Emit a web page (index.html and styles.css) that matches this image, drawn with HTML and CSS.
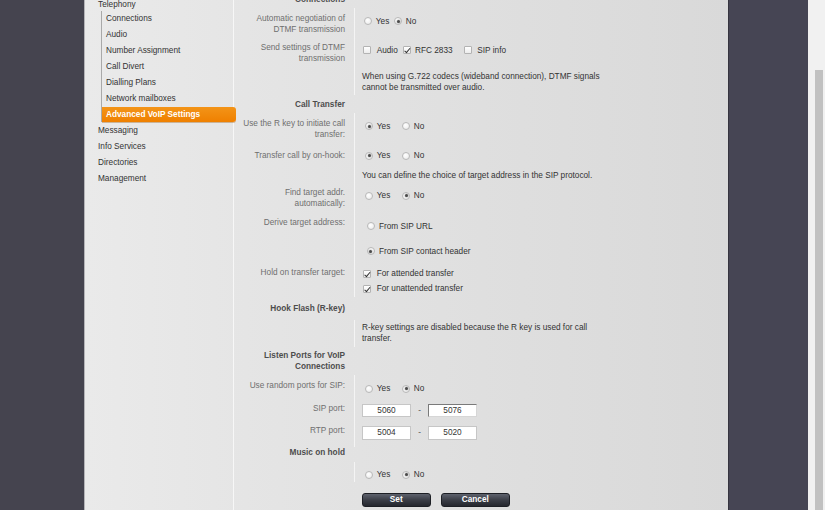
FILE: index.html
```html
<!DOCTYPE html>
<html lang="en">
<head>
<meta charset="utf-8">
<title>Advanced VoIP Settings</title>
<link rel="stylesheet" href="styles.css">
</head>
<body>
<div class="page">
  <div class="band-left"></div>
  <div class="panel">
    <nav class="nav">
      <div class="nav-item top">Telephony</div>
      <div class="sub">
        <div class="nav-sub">Connections</div>
        <div class="nav-sub">Audio</div>
        <div class="nav-sub">Number Assignment</div>
        <div class="nav-sub">Call Divert</div>
        <div class="nav-sub">Dialling Plans</div>
        <div class="nav-sub">Network mailboxes</div>
        <div class="nav-sub active">Advanced VoIP Settings</div>
      </div>
      <div class="nav-item">Messaging</div>
      <div class="nav-item">Info Services</div>
      <div class="nav-item">Directories</div>
      <div class="nav-item">Management</div>
    </nav>

    <main class="form">
      <div class="row head r-conn"><div class="lbl">Connections</div></div>

      <div class="row r-a">
        <div class="lbl">Automatic negotiation of DTMF transmission</div>
        <div class="val">
          <span class="opt tight first"><span class="radio"></span>Yes</span><span class="opt tight next"><span class="radio on"></span>No</span>
        </div>
      </div>
      <div class="row r-b">
        <div class="lbl">Send settings of DTMF transmission</div>
        <div class="val">
          <span class="chk-opt c-audio"><span class="box"></span>Audio</span><span class="chk-opt c-rfc"><span class="box on"></span>RFC 2833</span><span class="chk-opt c-sip"><span class="box"></span>SIP info</span>
        </div>
      </div>
      <div class="row r-c">
        <div class="lbl"></div>
        <div class="val hint">When using G.722 codecs (wideband connection), DTMF signals cannot be transmitted over audio.</div>
      </div>

      <div class="row head r-ct"><div class="lbl">Call Transfer</div></div>

      <div class="row r-r">
        <div class="lbl">Use the R key to initiate call transfer:</div>
        <div class="val">
          <span class="opt first"><span class="radio on"></span>Yes</span><span class="opt next"><span class="radio"></span>No</span>
        </div>
      </div>
      <div class="row r-tr">
        <div class="lbl">Transfer call by on-hook:</div>
        <div class="val">
          <span class="opt first"><span class="radio on"></span>Yes</span><span class="opt next"><span class="radio"></span>No</span>
        </div>
      </div>
      <div class="row r-def">
        <div class="lbl"></div>
        <div class="val hint">You can define the choice of target address in the SIP protocol.</div>
      </div>
      <div class="row r-find">
        <div class="lbl">Find target addr. automatically:</div>
        <div class="val">
          <span class="opt first"><span class="radio"></span>Yes</span><span class="opt next"><span class="radio on"></span>No</span>
        </div>
      </div>
      <div class="row r-der">
        <div class="lbl">Derive target address:</div>
        <div class="val">
          <span class="opt wide"><span class="radio"></span>From SIP URL</span>
        </div>
      </div>
      <div class="row r-cont">
        <div class="lbl"></div>
        <div class="val">
          <span class="opt wide"><span class="radio on"></span>From SIP contact header</span>
        </div>
      </div>
      <div class="row r-hold">
        <div class="lbl">Hold on transfer target:</div>
        <div class="val">
          <div class="chk-line"><span class="box on"></span>For attended transfer</div>
          <div class="chk-line"><span class="box on"></span>For unattended transfer</div>
        </div>
      </div>

      <div class="row head r-hf"><div class="lbl">Hook Flash (R-key)</div></div>

      <div class="row r-rk">
        <div class="lbl"></div>
        <div class="val hint">R-key settings are disabled because the R key is used for call transfer.</div>
      </div>

      <div class="row head r-lp"><div class="lbl">Listen Ports for VoIP Connections</div></div>

      <div class="row r-rnd">
        <div class="lbl">Use random ports for SIP:</div>
        <div class="val">
          <span class="opt first"><span class="radio"></span>Yes</span><span class="opt next"><span class="radio on"></span>No</span>
        </div>
      </div>
      <div class="row r-sip">
        <div class="lbl">SIP port:</div>
        <div class="val ports">
          <input class="port" type="text" value="5060"><span class="dash">-</span><input class="port focus" type="text" value="5076">
        </div>
      </div>
      <div class="row r-rtp">
        <div class="lbl">RTP port:</div>
        <div class="val ports">
          <input class="port" type="text" value="5004"><span class="dash">-</span><input class="port" type="text" value="5020">
        </div>
      </div>

      <div class="row head r-moh"><div class="lbl">Music on hold</div></div>

      <div class="row r-mohv">
        <div class="lbl"></div>
        <div class="val">
          <span class="opt first"><span class="radio"></span>Yes</span><span class="opt next"><span class="radio on"></span>No</span>
        </div>
      </div>

      <div class="row r-btn">
        <div class="lbl"></div>
        <div class="val noline">
          <button class="btn" type="button">Set</button><button class="btn" type="button">Cancel</button>
        </div>
      </div>
    </main>
  </div>
  <div class="band-right"></div>
  <div class="scrollbar"><div class="thumb"></div></div>
</div>
</body>
</html>
```
FILE: styles.css
```css
* { box-sizing: border-box; }

html, body {
  margin: 0;
  padding: 0;
  height: 510px;
  overflow: hidden;
}

body {
  font-family: "Liberation Sans", Arial, sans-serif;
  font-size: 8.25px;
  line-height: 11px;
  color: #333;
}

.page {
  display: flex;
  height: 510px;
}

.band-left {
  flex: 0 0 84px;
  background: #45444f;
}

.panel {
  flex: 0 0 644px;
  display: flex;
  border-left: 1px solid #b4b4b8;
  background: linear-gradient(to right, #eaeaea 0%, #e4e4e4 30%, #d9d9d9 100%);
}

.band-right {
  flex: 0 0 80px;
  background: #464554;
  border-left: 1px solid #35343f;
}

.scrollbar {
  flex: 1;
  background: #f1f1f1;
  padding-top: 70px;
  padding-left: 7px;
}

.thumb {
  width: 8px;
  height: 440px;
  background: #c1c1c1;
}

/* navigation */
.nav {
  flex: 0 0 149px;
  border-right: 1px solid #f7f7f7;
  margin-top: -2.5px;
  padding-left: 13px;
  color: #333;
}

.nav-item {
  height: 16px;
  line-height: 16px;
}

.nav-item.top {
  height: 13.5px;
  line-height: 13px;
}

.sub {
  margin-left: 3px;
  margin-right: -3px;
  border-left: 1px solid #a9a9a9;
  position: relative;
  z-index: 1;
}

.nav-sub {
  height: 16px;
  line-height: 16px;
  padding-left: 4px;
}

.nav-sub.active {
  height: 15px;
  line-height: 15px;
  margin-bottom: 1px;
  color: #fff;
  font-weight: bold;
  background: linear-gradient(#f39418, #ef8000);
  border-radius: 0 3px 3px 0;
  box-shadow: 0 1px 0 rgba(150, 80, 0, 0.35);
}

/* form */
.form {
  flex: 1;
  margin-top: -8px;
}

.row {
  display: flex;
  height: var(--h);
  --shift: 1px;
}

.row.head { --shift: 0px; }

.lbl {
  flex: 0 0 auto;
  width: 120px;
  padding: calc(var(--lt, 0px) + var(--shift)) 9px 0 5px;
  text-align: right;
  color: #6f6f6f;
}

.head .lbl {
  font-weight: bold;
  color: #4d4d4d;
}

.val {
  flex: 1;
  border-left: 1px solid #f4f4f4;
  padding: calc(var(--vt, 0px) + var(--shift)) 0 0 7px;
  color: #333;
}

.val.noline { border-left-color: transparent; }

.hint { padding-right: 120px; }

.r-conn { --h: 16px; --lt: 2px; }
.r-a    { --h: 29px; --lt: 4px; --vt: 6.5px; }
.r-b    { --h: 29px; --lt: 4px; --vt: 6.5px; }
.r-c    { --h: 29px; --vt: 3.5px; }
.r-ct   { --h: 18px; --lt: 3.5px; }
.r-r    { --h: 32px; --lt: 3.5px; --vt: 6.5px; }
.r-tr   { --h: 21px; --lt: 3.5px; --vt: 4px; }
.r-def  { --h: 16px; --vt: 2.5px; }
.r-find { --h: 29px; --lt: 3.5px; --vt: 7px; }
.r-der  { --h: 25px; --lt: 4.5px; --vt: 8.5px; }
.r-cont { --h: 25px; --vt: 8.5px; }
.r-hold { --h: 36px; --lt: 4.5px; --vt: 4px; }
.r-hf   { --h: 23px; --lt: 5.5px; }
.r-rk   { --h: 27px; --vt: 0.5px; }
.r-lp   { --h: 28px; --lt: 3px; }
.r-rnd  { --h: 22px; --lt: 3.5px; --vt: 7px; }
.r-sip  { --h: 22px; --lt: 4.5px; --vt: 5.7px; }
.r-rtp  { --h: 28px; --lt: 4.5px; --vt: 6px; }
.r-moh  { --h: 15px; --lt: 0px; }
.r-mohv { --h: 20px; --vt: 6px; }
.r-btn  { --h: 28px; --vt: 9.7px; }

/* radio options */
.opt {
  display: inline-flex;
  align-items: center;
  height: 11px;
  vertical-align: top;
}

.radio {
  display: inline-block;
  width: 8px;
  height: 8px;
  border-radius: 50%;
  border: 1px solid #b9b9b9;
  background: radial-gradient(circle at 40% 35%, #ffffff 0%, #efefef 70%, #e2e2e2 100%);
  margin-right: 3.5px;
  position: relative;
}

.radio.on::after {
  content: "";
  position: absolute;
  left: 1.5px;
  top: 1.5px;
  width: 3px;
  height: 3px;
  border-radius: 50%;
  background: #4a4a4a;
  box-shadow: 0 0 1px 0.5px rgba(80, 80, 80, 0.35);
}

.opt.first { margin-left: 3.3px; }
.opt.next { margin-left: 12px; }
.opt.tight.first { margin-left: 2.3px; }
.opt.tight.next { margin-left: 5px; }
.opt.wide { margin-left: 4.7px; }
.opt.wide .radio { margin-right: 4.3px; }

/* checkboxes */
.chk-opt {
  display: inline-flex;
  align-items: center;
  height: 11px;
  vertical-align: top;
}

.box {
  display: inline-block;
  width: 8px;
  height: 8px;
  border: 1px solid #b3b3b3;
  background: linear-gradient(#ffffff, #ececec);
  position: relative;
  border-radius: 1px;
}

.box.on::after {
  content: "";
  position: absolute;
  left: 2.2px;
  top: 0px;
  width: 2px;
  height: 4.5px;
  border: solid #2f2f2f;
  border-width: 0 1.4px 1.4px 0;
  transform: rotate(40deg);
}

.c-audio { margin-left: 1.3px; }
.c-audio .box { margin-right: 5.4px; }
.c-rfc { margin-left: 5.5px; }
.c-rfc .box { margin-right: 3.7px; }
.c-sip { margin-left: 11.7px; }
.c-sip .box { margin-right: 5px; }

.chk-line {
  display: flex;
  align-items: center;
  height: 15px;
  padding-left: 0.7px;
}

.chk-line .box { margin-right: 6px; }

/* ports */
.ports {
  display: flex;
  align-items: flex-start;
}

.port {
  width: 49px;
  height: 13.5px;
  margin: 0;
  padding: 0;
  border: 1px solid #c6c6c6;
  background: #fff;
  font-family: "Liberation Sans", Arial, sans-serif;
  font-size: 8.25px;
  line-height: 11px;
  color: #333;
  text-align: center;
  outline: none;
}

.port.focus {
  border-color: #7a7a7a #d6d6d6 #d6d6d6 #7a7a7a;
}

.dash {
  display: inline-block;
  width: 17px;
  text-align: center;
  line-height: 13px;
  color: #555;
}

/* buttons */
.btn {
  width: 68.5px;
  height: 14.5px;
  margin: 0 10.5px 0 0;
  padding: 0;
  border: 1px solid #1d1f25;
  border-radius: 3px;
  background: linear-gradient(#5e626d 0%, #3b3e47 50%, #25272e 100%);
  color: #fff;
  font-family: "Liberation Sans", Arial, sans-serif;
  font-size: 8.25px;
  font-weight: bold;
  line-height: 12px;
  vertical-align: top;
}
```
